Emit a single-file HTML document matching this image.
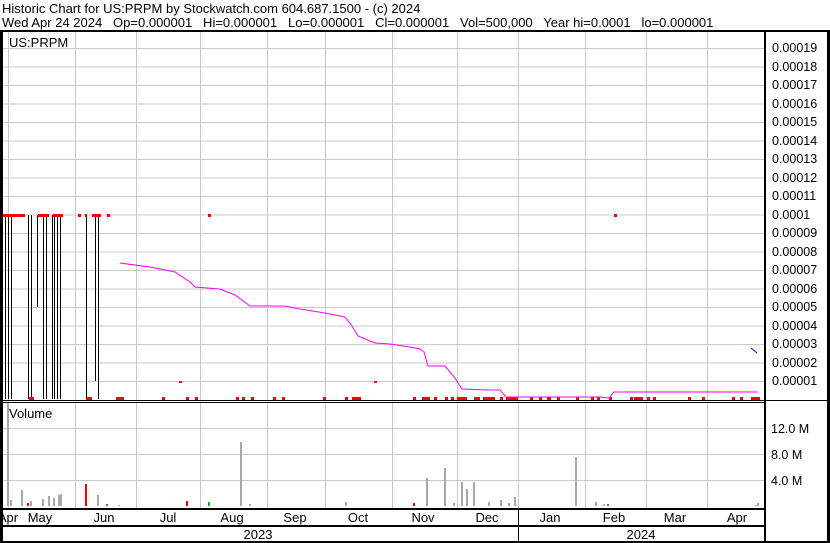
<!DOCTYPE html>
<html><head><meta charset="utf-8"><style>
html,body{margin:0;padding:0;background:#fff;}
svg{display:block;font-family:"Liberation Sans",Arial,sans-serif;}
</style></head><body>
<svg width="830" height="543" viewBox="0 0 830 543" xmlns="http://www.w3.org/2000/svg">
<rect width="830" height="543" fill="#fff"/>
<text x="2" y="13" font-size="13">Historic Chart for US:PRPM by Stockwatch.com 604.687.1500 - (c) 2024</text>
<text x="2" y="27" font-size="13" xml:space="preserve">Wed Apr 24 2024   Op=0.000001   Hi=0.000001   Lo=0.000001   Cl=0.000001   Vol=500,000   Year hi=0.0001   lo=0.000001</text>
<g stroke="#c8c8c8" stroke-width="1">
<path d="M8.5 32V509M75.5 32V509M136.5 32V509M200.5 32V509M267.5 32V509M325.5 32V509M392.5 32V509M457.5 32V509M518.5 32V509M585.5 32V509M646.5 32V509M707.5 32V509"/>
<path d="M3 48.5H765M3 67H765M3 85.5H765M3 104H765M3 122.5H765M3 141H765M3 159.5H765M3 178H765M3 196.5H765M3 215H765M3 233.5H765M3 252H765M3 270.5H765M3 289H765M3 307.5H765M3 326H765M3 344.5H765M3 363H765M3 381.5H765"/>
<path d="M3 428.5H765M3 454.5H765M3 480.5H765"/>
</g>
<text x="9" y="47" font-size="13">US:PRPM</text>
<text x="9" y="418" font-size="13">Volume</text>
<!-- black bars -->
<g stroke="#000" stroke-width="1">
<path d="M5.5 215V399M8.5 215V399M11.5 215V399M28.5 215V399M31.5 215V399M37.5 215V307M43.5 215V399M46.5 215V399M52.5 215V399M54.5 215V399M57.5 215V399M60.5 215V399M86.5 215V399M95.5 215V381M98.5 215V399"/>
</g>
<g fill="#f00">
<rect x="2" y="214" width="23" height="3"/><rect x="38" y="214" width="11" height="3"/><rect x="53" y="214" width="10" height="3"/><rect x="78" y="214" width="3" height="3"/><rect x="85" y="214" width="2" height="3"/><rect x="92" y="214" width="9" height="3"/><rect x="107" y="214" width="3" height="3"/>
<rect x="208" y="214" width="3" height="3"/><rect x="614" y="214" width="3" height="3"/>
<rect x="179" y="381" width="3" height="2"/><rect x="374" y="381" width="3" height="2"/>
<rect x="29" y="397" width="5" height="3"/><rect x="86" y="397" width="6" height="3"/><rect x="116" y="397" width="8" height="3"/><rect x="162" y="397" width="3" height="3"/><rect x="186" y="397" width="3" height="3"/><rect x="195" y="397" width="3" height="3"/>
<rect x="236" y="397" width="3" height="3"/><rect x="242" y="397" width="3" height="3"/><rect x="251" y="397" width="3" height="3"/><rect x="273" y="397" width="3" height="3"/><rect x="282" y="397" width="3" height="3"/><rect x="323" y="397" width="3" height="3"/><rect x="345" y="397" width="3" height="3"/><rect x="352" y="397" width="9" height="3"/>
<rect x="413" y="397" width="3" height="3"/><rect x="422" y="397" width="8" height="3"/><rect x="434" y="397" width="3" height="3"/><rect x="445" y="397" width="3" height="3"/><rect x="451" y="397" width="3" height="3"/><rect x="457" y="397" width="10" height="3"/><rect x="474" y="397" width="6" height="3"/><rect x="483" y="397" width="12" height="3"/><rect x="500" y="397" width="3" height="3"/><rect x="506" y="397" width="12" height="3"/><rect x="530" y="397" width="3" height="3"/><rect x="539" y="397" width="3" height="3"/><rect x="547" y="397" width="4" height="3"/>
<rect x="557" y="397" width="3" height="3"/><rect x="576" y="397" width="3" height="3"/><rect x="591" y="397" width="3" height="3"/><rect x="597" y="397" width="3" height="3"/><rect x="609" y="397" width="3" height="3"/><rect x="630" y="397" width="3" height="3"/><rect x="634" y="397" width="9" height="3"/><rect x="647" y="397" width="3" height="3"/><rect x="653" y="397" width="3" height="3"/><rect x="688" y="397" width="3" height="3"/><rect x="702" y="397" width="3" height="3"/><rect x="732" y="397" width="3" height="3"/><rect x="740" y="397" width="3" height="3"/><rect x="751" y="397" width="9" height="3"/>
</g>
<polyline fill="none" stroke="#f0f" stroke-width="1" points="120,263 150,267 175,272 190,282 195,287 220,289 235,295 250,306 285,306 300,309 325,313 345,317 352,326 358,336 375,343 390,344 410,347 420,349 424,352 428,366 445,366 455,378 462,389 488,390 500,390 506,397 600,397 609,398 614,392 758,392"/>
<path d="M751 348L757 353" stroke="#00f" stroke-width="1"/>
<!-- volume bars -->
<g fill="#a8a8a8">
<rect x="7" y="402" width="2" height="104"/><rect x="10" y="500" width="2" height="6"/><rect x="21" y="490" width="2" height="16"/><rect x="30" y="501" width="2" height="5"/><rect x="42" y="499" width="2" height="7"/><rect x="48" y="496" width="2" height="10"/><rect x="53" y="498" width="2" height="8"/><rect x="58" y="495" width="2" height="11"/><rect x="60" y="494" width="2" height="12"/>
<rect x="97" y="495" width="2" height="11"/><rect x="118" y="505" width="2" height="1"/><rect x="240" y="442" width="2" height="64"/><rect x="249" y="504" width="2" height="2"/>
<rect x="345" y="502" width="2" height="4"/><rect x="426" y="478" width="2" height="28"/><rect x="444" y="468" width="2" height="38"/><rect x="453" y="503" width="2" height="3"/><rect x="461" y="482" width="2" height="24"/><rect x="466" y="489" width="2" height="17"/><rect x="473" y="482" width="2" height="24"/><rect x="488" y="502" width="2" height="4"/><rect x="500" y="500" width="2" height="6"/><rect x="508" y="503" width="2" height="3"/><rect x="514" y="497" width="2" height="9"/>
<rect x="575" y="457" width="2" height="49"/><rect x="595" y="502" width="2" height="4"/><rect x="603" y="504" width="2" height="2"/><rect x="755" y="505" width="2" height="1"/><rect x="757" y="503" width="2" height="3"/>
</g>
<g fill="#f00"><rect x="85" y="484" width="2" height="22"/><rect x="186" y="501" width="2" height="5"/><rect x="413" y="503" width="2" height="3"/><rect x="27" y="503" width="2" height="3"/></g>
<g fill="#2a2"><rect x="208" y="502" width="2" height="4"/><rect x="106" y="504" width="2" height="2"/><rect x="607" y="504" width="2" height="2"/></g>
<!-- frame lines -->
<g fill="#000">
<rect x="0" y="30" width="830" height="2"/>
<rect x="0" y="30" width="3" height="513"/>
<rect x="827" y="30" width="3" height="513"/>
<rect x="764" y="30" width="2" height="513"/>
<rect x="3" y="400" width="762" height="1"/>
<rect x="3" y="402" width="762" height="1"/>
<rect x="766" y="400" width="62" height="1"/>
<rect x="3" y="508" width="762" height="2"/>
<rect x="3" y="525" width="762" height="2"/>
<rect x="0" y="541" width="830" height="2"/>
<rect x="518" y="510" width="1" height="31"/>
</g>
<g font-size="12.5" text-anchor="start">
<text x="772" y="52">0.00019</text><text x="772" y="71">0.00018</text><text x="772" y="89">0.00017</text><text x="772" y="108">0.00016</text><text x="772" y="126">0.00015</text><text x="772" y="145">0.00014</text><text x="772" y="163">0.00013</text><text x="772" y="182">0.00012</text><text x="772" y="200">0.00011</text><text x="772" y="219">0.0001</text><text x="772" y="237">0.00009</text><text x="772" y="256">0.00008</text><text x="772" y="274">0.00007</text><text x="772" y="293">0.00006</text><text x="772" y="311">0.00005</text><text x="772" y="330">0.00004</text><text x="772" y="348">0.00003</text><text x="772" y="367">0.00002</text><text x="772" y="385">0.00001</text>
<text x="771" y="433">12.0 M</text><text x="771" y="459">8.0 M</text><text x="771" y="485">4.0 M</text>
</g>
<g font-size="13" text-anchor="middle">
<text x="8" y="522">Apr</text><text x="40" y="522">May</text><text x="104" y="522">Jun</text><text x="168" y="522">Jul</text><text x="232" y="522">Aug</text><text x="295" y="522">Sep</text><text x="358" y="522">Oct</text><text x="423" y="522">Nov</text><text x="487" y="522">Dec</text><text x="550" y="522">Jan</text><text x="614" y="522">Feb</text><text x="675" y="522">Mar</text><text x="737" y="522">Apr</text>
<text x="258" y="539">2023</text><text x="641" y="539">2024</text>
</g>
</svg>
</body></html>
